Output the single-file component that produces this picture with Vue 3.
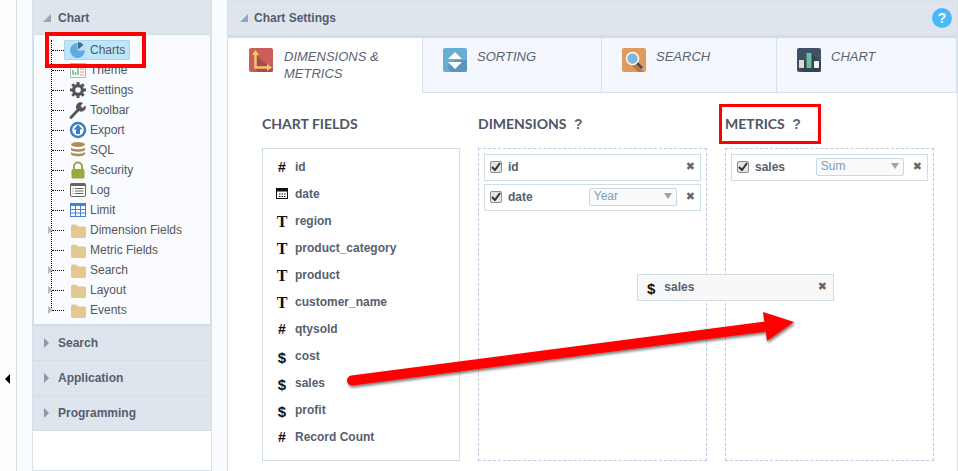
<script setup>
const tree = [
  { t: 'Charts', i: 'pie', sel: true },
  { t: 'Theme', i: 'theme' },
  { t: 'Settings', i: 'gear' },
  { t: 'Toolbar', i: 'wrench' },
  { t: 'Export', i: 'export' },
  { t: 'SQL', i: 'db' },
  { t: 'Security', i: 'lock' },
  { t: 'Log', i: 'log' },
  { t: 'Limit', i: 'grid' },
  { t: 'Dimension Fields', i: 'folder', exp: true },
  { t: 'Metric Fields', i: 'folder' },
  { t: 'Search', i: 'folder', exp: true },
  { t: 'Layout', i: 'folder', exp: true },
  { t: 'Events', i: 'folder', exp: true }
]
const sections = ['Search', 'Application', 'Programming']
const tabs = [
  { a: 'SORTING', i: 'sort', w: 179 },
  { a: 'SEARCH', i: 'search', w: 175 },
  { a: 'CHART', i: 'chart', w: 180 }
]
const fields = [
  { n: 'id', k: '#' },
  { n: 'date', k: 'cal' },
  { n: 'region', k: 'T' },
  { n: 'product_category', k: 'T' },
  { n: 'product', k: 'T' },
  { n: 'customer_name', k: 'T' },
  { n: 'qtysold', k: '#' },
  { n: 'cost', k: '$' },
  { n: 'sales', k: '$' },
  { n: 'profit', k: '$' },
  { n: 'Record Count', k: '#' }
]
</script>

<template>
  <div class="page">
    <div class="rail"><span class="rail-arrow"></span></div>
    <div class="side">
      <div class="panel">
        <div class="acc acc-open"><span class="tri-open"></span>Chart</div>
        <div class="tree">
          <div class="trunk"></div>
          <div v-for="n in tree" :key="n.t" class="node">
            <span v-if="n.exp" class="exp"></span>
            <span class="dots"></span>
            <span class="label" :class="{ sel: n.sel }">
              <svg class="ticon" width="18" height="18" viewBox="0 0 18 18">
                <template v-if="n.i === 'pie'">
                  <circle cx="8.5" cy="9.5" r="7.5" fill="#62a9e4" />
                  <path d="M8.5 9.5V2a7.5 7.5 0 0 1 7.5 7.5z" fill="#c7def2" />
                  <path d="M9 8.5V1a7 7 0 0 1 5.5 3z" fill="#3c6d93" />
                </template>
                <template v-else-if="n.i === 'theme'">
                  <rect x="1.5" y="2.5" width="15" height="14" fill="#fff" stroke="#b5b5b5" />
                  <path d="M4 14V9M6.500 14v-3M9 14V7" stroke="#6cba8c" stroke-width="1.500" />
                  <path d="M11 8h4M11 11h4M11 14h4" stroke="#e08b8b" />
                </template>
                <template v-else-if="n.i === 'gear'">
                  <path d="M9 1v16M1 9h16M3.300 3.300l11.400 11.400M14.700 3.300L3.300 14.700" stroke="#555" stroke-width="3" />
                  <circle cx="9" cy="9" r="6" fill="#555" />
                  <circle cx="9" cy="9" r="2.800" fill="#f9fbfe" />
                </template>
                <template v-else-if="n.i === 'wrench'">
                  <path d="M2 16.500L9.500 8.500" stroke="#555" stroke-width="2.800" stroke-linecap="round" />
                  <path d="M9 9.500A4.500 4.500 0 0 1 14 2l-2.500 3 2 2 3-2.500A4.500 4.500 0 0 1 10 10z" fill="#555" />
                </template>
                <template v-else-if="n.i === 'export'">
                  <circle cx="9" cy="9" r="7" fill="#fff" stroke="#3c7fbd" stroke-width="2.500" />
                  <path d="M9 3.500L13.500 8.500H11V13H7V8.500H4.500z" fill="#3c7fbd" />
                </template>
                <template v-else-if="n.i === 'db'">
                  <ellipse cx="9" cy="3.500" rx="7" ry="2.500" fill="#b08d57" />
                  <path d="M2 6c0 3 14 3 14 0v2.500c0 3-14 3-14 0zM2 10.500c0 3 14 3 14 0V13c0 3-14 3-14 0z" fill="#b08d57" />
                </template>
                <template v-else-if="n.i === 'lock'">
                  <path d="M5 8V5.500a4 4 0 0 1 8 0V8" fill="none" stroke="#9aaa3e" stroke-width="2" />
                  <rect x="2.500" y="8" width="13" height="9.500" rx="1.500" fill="#9aaa3e" />
                </template>
                <template v-else-if="n.i === 'log'">
                  <rect x="1.500" y="2.500" width="15" height="13" rx="1.500" fill="#fff" stroke="#666" />
                  <rect x="1.500" y="2.500" width="15" height="2.500" fill="#666" />
                  <path d="M3.500 7.500h1M3.500 10h1M3.500 12.500h1M6 7.500h8.500M6 10h8.500M6 12.500h8.500" stroke="#666" />
                </template>
                <template v-else-if="n.i === 'grid'">
                  <rect x="1.500" y="2.500" width="15" height="13" fill="#fff" stroke="#4a7fdc" />
                  <rect x="1.500" y="2.500" width="15" height="2.500" fill="#4a7fdc" />
                  <path d="M6.500 5v10M11.500 5v10M2 8.500h14M2 12h14" stroke="#4a7fdc" />
                </template>
                <template v-else>
                  <path d="M2 5a1.500 1.500 0 0 1 1.500-1.500h3.500L9 5.500h6.500a1.500 1.500 0 0 1 1.500 1.500v8.500a1.500 1.500 0 0 1-1.500 1.500H3.500A1.500 1.500 0 0 1 2 15.500z" fill="#e1c98f" />
                </template>
              </svg>
              <span>{{ n.t }}</span>
            </span>
          </div>
        </div>
        <div v-for="s in sections" :key="s" class="acc"><span class="tri-closed"></span>{{ s }}</div>
      </div>
    </div>

    <div class="main">
      <div class="main-head">
        <span class="tri-open small"></span>Chart Settings
        <span class="help">?</span>
      </div>
      <div class="tabs">
        <div class="tab active">
          <svg class="tab-icon" width="24" height="24" viewBox="0 0 24 24">
            <rect width="24" height="24" rx="2" fill="#cb5d5c" />
            <path d="M7 7l17 15v0a2 2 0 0 1-2 2H8l-1-3z" fill="#a94c4c" />
            <path d="M6.500 4v15.500H20" fill="none" stroke="#f5c56a" stroke-width="2.500" />
            <path d="M3 7l3.500-5L10 7zM18 16l5 3.500-5 3.500z" fill="#f5c56a" />
          </svg>
          <span>DIMENSIONS &amp;<br />METRICS</span>
        </div>
        <div v-for="tb in tabs" :key="tb.a" class="tab" :style="{ width: tb.w + 'px' }">
          <svg class="tab-icon" width="24" height="24" viewBox="0 0 24 24">
            <template v-if="tb.i === 'sort'">
              <rect width="24" height="24" rx="2" fill="#69aed3" />
              <path d="M12 12h12v10a2 2 0 0 1-2 2H8l-4-5z" fill="#5a97b8" />
              <path d="M12 4l7 7H5zM5 14h14l-7 7z" fill="#fff" />
            </template>
            <template v-else-if="tb.i === 'search'">
              <rect width="24" height="24" rx="2" fill="#e09a5c" />
              <path d="M14 16l8 8h-6l-6-6z" fill="#b87c48" />
              <path d="M14 14l6 6" stroke="#3d4d5c" stroke-width="2.500" />
              <circle cx="10.500" cy="10.500" r="6" fill="#7cb8da" stroke="#fff" stroke-width="1.500" />
            </template>
            <template v-else>
              <rect width="24" height="24" rx="2" fill="#3f5166" />
              <path d="M14 5l10 10v7a2 2 0 0 1-2 2H7l-5-4z" fill="#334456" />
              <rect x="2" y="12" width="5" height="8" fill="#e0dccb" />
              <rect x="9.500" y="5" width="5" height="15" fill="#6dbba4" />
              <rect x="17" y="13" width="5" height="7" rx="1" fill="#f4f4f4" />
            </template>
          </svg>
          <span>{{ tb.a }}</span>
        </div>
      </div>
      <div class="body">
        <div class="col col-fields">
          <h3 class="title">CHART FIELDS</h3>
          <div class="box">
            <div v-for="f in fields" :key="f.n" class="field">
              <span class="ficon">
                <svg v-if="f.k === 'cal'" width="12" height="11" viewBox="0 0 12 11">
                  <rect x="0.500" y="1.500" width="11" height="9" fill="#fff" stroke="#111" />
                  <rect y="0" width="12" height="3.500" fill="#111" />
                  <path d="M3 6h1.500M5.500 6H7M8 6h1.500M3 8.500h1.500M5.500 8.500H7M8 8.500h1.500" stroke="#111" />
                </svg>
                <b v-else-if="f.k === 'T'" class="g-t">T</b>
                <b v-else-if="f.k === '$'" class="g-d">$</b>
                <b v-else class="g-h">#</b>
              </span>
              {{ f.n }}
            </div>
          </div>
        </div>
        <div class="col col-dim">
          <h3 class="title">DIMENSIONS <span class="q">?</span></h3>
          <div class="drop">
            <div class="item">
              <span class="chk"><svg width="10" height="9" viewBox="0 0 10 9"><path d="M1 5l3 3 5-7" fill="none" stroke="#333" stroke-width="2" /></svg></span>
              <span class="iname">id</span>
              <span class="x">✖</span>
            </div>
            <div class="item">
              <span class="chk"><svg width="10" height="9" viewBox="0 0 10 9"><path d="M1 5l3 3 5-7" fill="none" stroke="#333" stroke-width="2" /></svg></span>
              <span class="iname">date</span>
              <span class="sel-box">Year<i class="caret"></i></span>
              <span class="x">✖</span>
            </div>
          </div>
        </div>
        <div class="col col-met">
          <h3 class="title">METRICS <span class="q">?</span></h3>
          <div class="drop">
            <div class="item">
              <span class="chk"><svg width="10" height="9" viewBox="0 0 10 9"><path d="M1 5l3 3 5-7" fill="none" stroke="#333" stroke-width="2" /></svg></span>
              <span class="iname">sales</span>
              <span class="sel-box">Sum<i class="caret"></i></span>
              <span class="x">✖</span>
            </div>
          </div>
        </div>
      </div>
    </div>

    <div class="ghost">
      <b class="g-d">$</b><span class="gname">sales</span><span class="x">✖</span>
    </div>
    <div class="mark mark-a"></div>
    <div class="mark mark-b"></div>
    <svg class="arrow" width="958" height="471" viewBox="0 0 958 471">
      <defs>
        <filter id="sh" x="-5%" y="-30%" width="110%" height="160%">
          <feDropShadow dx="1" dy="2" stdDeviation="1.500" flood-color="#000" flood-opacity="0.550" />
        </filter>
      </defs>
      <g filter="url(#sh)">
        <path d="M352 380.500L770 326" stroke="#f00" stroke-width="10" stroke-linecap="round" fill="none" />
        <path d="M763 312L794 322L767 341z" fill="#f00" />
      </g>
    </svg>
  </div>
</template>

<style>
html, body { margin: 0; background: #fff; }
</style>

<style scoped>
.page {
  position: relative;
  display: flex;
  width: 958px;
  height: 471px;
  overflow: hidden;
  background: #fff;
  font-family: "Liberation Sans", Arial, sans-serif;
  font-size: 12px;
  color: #48505f;
}
.rail {
  box-sizing: border-box;
  flex: none;
  width: 17px;
  padding: 374px 0 0 5px;
  background: #fcfdff;
  border-right: 1px solid #d6e1ea;
}
.rail-arrow {
  display: block;
  width: 0;
  height: 0;
  border-top: 5px solid transparent;
  border-bottom: 5px solid transparent;
  border-right: 5px solid #000;
}
.side {
  box-sizing: border-box;
  flex: none;
  width: 210px;
  padding: 0 15px;
  background: #f9fbfe;
}
.panel {
  box-sizing: border-box;
  width: 180px;
  height: 471px;
  background: #fff;
  border: 1px solid #d6e1ea;
  border-top: 0;
}
.acc {
  display: flex;
  align-items: center;
  box-sizing: border-box;
  height: 35px;
  padding-left: 11px;
  background: #dfe5ed;
  border-bottom: 1px solid #d2dee6;
  font-weight: bold;
  color: #545e6f;
}
.acc-open { height: 34px; padding: 2px 0 0 10px; border-bottom: 0; }
.tri-open {
  width: 0;
  height: 0;
  margin-right: 7px;
  border-left: 8px solid transparent;
  border-bottom: 8px solid #98a3b3;
}
.tri-open.small { margin-right: 6px; }
.tri-closed {
  width: 0;
  height: 0;
  margin-right: 9px;
  border-top: 5px solid transparent;
  border-bottom: 5px solid transparent;
  border-left: 5px solid #8c97aa;
}
.tree {
  position: relative;
  box-sizing: border-box;
  height: 292px;
  padding-top: 5px;
  background: #f9fbfe;
  border: solid #d2dee6;
  border-width: 1px 1px 2px;
}
.trunk {
  position: absolute;
  left: 17px;
  top: 5px;
  height: 270px;
  border-left: 1px dotted #000;
}
.node {
  position: relative;
  display: flex;
  align-items: center;
  height: 20px;
  padding-left: 18px;
  color: #52565e;
}
.exp {
  position: absolute;
  left: 14px;
  top: 6px;
  width: 0;
  height: 0;
  border-top: 4px solid transparent;
  border-bottom: 4px solid transparent;
  border-left: 5px solid #bbb;
}
.dots {
  width: 12px;
  border-top: 1px dotted #000;
}
.label {
  display: flex;
  align-items: center;
  box-sizing: border-box;
  height: 20px;
  padding-left: 4px;
  border: 1px solid transparent;
}
.ticon { margin-right: 3px; flex: none; }
.sel {
  width: 66px;
  background: #bde6fb;
  border-color: #a9d6ec;
  border-radius: 1px;
}
.main {
  box-sizing: border-box;
  flex: none;
  width: 731px;
  height: 471px;
  background: #fff;
  border: solid #d6e1ea;
  border-width: 0 1px;
}
.main-head {
  position: relative;
  display: flex;
  align-items: center;
  box-sizing: border-box;
  height: 38px;
  padding-left: 12px;
  background: #dfe5ed;
  border-top: 1px solid #d6e1ea;
  border-bottom: 3px solid #d2dee6;
  font-weight: bold;
  color: #545e6f;
}
.help {
  position: absolute;
  left: 704px;
  top: 7px;
  width: 20px;
  height: 20px;
  border-radius: 50%;
  background: #4cb9f7;
  color: #fff;
  font: bold 14px/20px "Liberation Sans", Arial, sans-serif;
  text-align: center;
}
.tabs { display: flex; height: 55px; }
.tab {
  display: flex;
  flex: none;
  align-items: flex-start;
  box-sizing: border-box;
  height: 55px;
  padding: 10px 0 0 20px;
  background: #f4f8fe;
  border-right: 1px solid #d6e1ea;
  border-bottom: 1px solid #d6e1ea;
  font-style: italic;
  font-size: 13px;
  line-height: 17px;
  color: #5b6371;
}
.tab span { margin-left: 10px; }
.tab.active {
  width: 195px;
  padding-left: 21px;
  background: #fff;
  border-bottom: 0;
}
.tab.active span { margin-left: 11px; }
.tab-icon { flex: none; }
.body { display: flex; gap: 18px; padding-left: 34px; }
.col { flex: none; }
.col-fields { width: 198px; }
.col-dim { width: 229px; }
.col-met { width: 209px; }
.title {
  height: 55px;
  margin: 0;
  padding-top: 22px;
  box-sizing: border-box;
  font: 700 14px/18px Lato, sans-serif;
  color: #4d5666;
}
.q {
  margin-left: 4px;
  font: bold 14px "Liberation Sans", Arial, sans-serif;
  color: #5f6878;
}
.box {
  box-sizing: border-box;
  height: 313px;
  padding-top: 4px;
  border: 1px solid #cfdde6;
}
.field {
  display: flex;
  align-items: center;
  height: 27px;
  font-weight: bold;
  color: #565f70;
}
.ficon {
  display: flex;
  justify-content: center;
  align-items: center;
  width: 12px;
  margin: 0 7px 0 13px;
  color: #111;
}
.g-t { font: bold 16px/1 "Liberation Serif", serif; color: #111; padding-top: 3px; }
.g-d { font: bold 15px/1 "Liberation Sans", sans-serif; color: #111; padding-top: 3px; }
.g-h { font: bold 14px/1 "Liberation Sans", sans-serif; color: #111; }
.drop {
  box-sizing: border-box;
  height: 313px;
  padding: 5px;
  border: 1px dashed #bccbe2;
}
.item {
  display: flex;
  align-items: center;
  box-sizing: border-box;
  height: 27px;
  margin-bottom: 3px;
  padding: 0 5px 2px;
  background: #fff;
  border: 1px solid #cfdde6;
}
.chk {
  display: flex;
  align-items: center;
  justify-content: center;
  box-sizing: border-box;
  width: 12px;
  height: 12px;
  margin-right: 6px;
  background: #e4e4e4;
  border: 1px solid #8e8e8e;
  border-radius: 2px;
}
.iname { font-weight: bold; color: #565f70; }
.sel-box {
  position: relative;
  box-sizing: border-box;
  width: 88px;
  height: 18px;
  margin: 1px 0 0 auto;
  padding-left: 4px;
  background: #f8fafc;
  border: 1px solid #c9d9e3;
  border-radius: 2px;
  line-height: 15px;
  color: #7d9db3;
}
.caret {
  position: absolute;
  right: 4px;
  top: 4px;
  width: 0;
  height: 0;
  border-left: 4px solid transparent;
  border-right: 4px solid transparent;
  border-top: 6px solid #a3a3a3;
}
.x {
  margin-left: auto;
  font: 11px "DejaVu Sans", sans-serif;
  color: #666;
}
.sel-box + .x { margin-left: 9px; }
.ghost {
  position: absolute;
  left: 637px;
  top: 274px;
  display: flex;
  align-items: center;
  box-sizing: border-box;
  width: 197px;
  height: 27px;
  padding: 0 6px 2px 9px;
  background: #f8f8f8;
  border: 1px solid #cfdde6;
}
.gname { margin-left: 9px; font-weight: bold; color: #565f70; }
.mark { position: absolute; box-sizing: border-box; border-style: solid; border-color: #f00; }
.mark-a { left: 45px; top: 32px; width: 101px; height: 36px; border-width: 4px; }
.mark-b { left: 719px; top: 104px; width: 102px; height: 40px; border-width: 3px; }
.arrow { position: absolute; left: 0; top: 0; pointer-events: none; }
</style>
